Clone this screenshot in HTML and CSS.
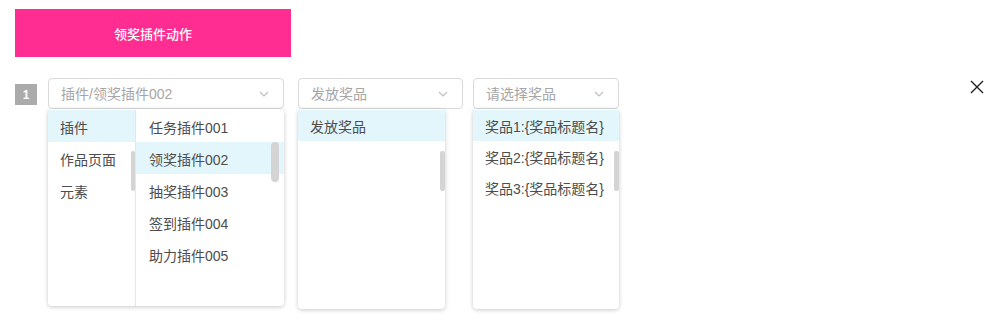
FILE: index.html
```html
<!DOCTYPE html>
<html lang="zh">
<head>
<meta charset="utf-8">
<link rel="stylesheet" href="styles.css">
</head>
<body>
<div class="page">
  <div class="action-btn">领奖插件动作</div>
  <div class="row">
    <div class="badge">1</div>
    <div class="select s1">
      <span class="value">插件/领奖插件002</span>
      <svg class="arrow" width="10" height="6" viewBox="0 0 10 6"><path d="M1 1 L5 5 L9 1" fill="none" stroke="#bfbfbf" stroke-width="1.2"/></svg>
      <div class="menu m1">
        <div class="col left">
          <div class="item active">插件</div>
          <div class="item">作品页面</div>
          <div class="item">元素</div>
          <div class="bar bar-left"></div>
        </div>
        <div class="col right">
          <div class="item">任务插件001</div>
          <div class="item active">领奖插件002</div>
          <div class="item">抽奖插件003</div>
          <div class="item">签到插件004</div>
          <div class="item">助力插件005</div>
          <div class="bar bar-right"></div>
        </div>
      </div>
    </div>
    <div class="select s2">
      <span class="value">发放奖品</span>
      <svg class="arrow" width="10" height="6" viewBox="0 0 10 6"><path d="M1 1 L5 5 L9 1" fill="none" stroke="#bfbfbf" stroke-width="1.2"/></svg>
      <div class="menu m2">
        <div class="item2 active">发放奖品</div>
        <div class="bar bar-thin"></div>
      </div>
    </div>
    <div class="select s3">
      <span class="value">请选择奖品</span>
      <svg class="arrow" width="10" height="6" viewBox="0 0 10 6"><path d="M1 1 L5 5 L9 1" fill="none" stroke="#bfbfbf" stroke-width="1.2"/></svg>
      <div class="menu m3">
        <div class="item2 active">奖品1:{奖品标题名}</div>
        <div class="item2">奖品2:{奖品标题名}</div>
        <div class="item2">奖品3:{奖品标题名}</div>
        <div class="bar bar-thin"></div>
      </div>
    </div>
    <svg class="close" width="14" height="14" viewBox="0 0 14 14"><path d="M1 1 L13 13 M13 1 L1 13" stroke="#1f1f1f" stroke-width="1.4" fill="none"/></svg>
  </div>
</div>
</body>
</html>
```

FILE: styles.css
```css
* { box-sizing: border-box; }
html, body { margin: 0; padding: 0; background: #fff; }
body {
  font-family: "Liberation Sans", "Noto Sans CJK SC", sans-serif;
  width: 1003px;
  height: 321px;
  overflow: hidden;
}
.page {
  padding: 9px 19px 0 15px;
}
.action-btn {
  width: 276px;
  height: 48px;
  background: #ff2c91;
  color: #fff;
  font-size: 13px;
  font-weight: 500;
  display: flex;
  align-items: center;
  justify-content: center;
}
.row {
  display: flex;
  align-items: flex-start;
  margin-top: 21px;
}
.badge {
  width: 22px;
  height: 21px;
  margin-top: 6px;
  background: #ababab;
  color: #fff;
  font-size: 12px;
  font-weight: 700;
  display: flex;
  align-items: center;
  justify-content: center;
}
.select {
  position: relative;
  height: 31px;
  border: 1px solid #d9d9d9;
  border-radius: 4px;
  display: flex;
  align-items: center;
  padding-left: 12px;
  font-size: 14px;
  color: #a6a6a6;
}
.s1 { width: 236px; margin-left: 11px; }
.s2 { width: 165px; margin-left: 14px; }
.s3 { width: 146px; margin-left: 10px; }
.value { line-height: 1; }
.arrow {
  position: absolute;
  right: 14px;
  top: 12px;
}
.close {
  margin-left: auto;
  margin-top: 2px;
}
.menu {
  position: absolute;
  left: -1px;
  top: calc(100% + 1px);
  background: #fff;
  border-radius: 4px;
  box-shadow: 0 1px 4px rgba(0,0,0,0.22);
  padding-top: 1px;
  color: #4d4d4d;
  font-size: 14px;
}
.m1 {
  width: 236px;
  height: 197px;
  display: flex;
}
.m2 { width: 147px; height: 200px; }
.m3 { width: 146px; height: 200px; }
.col { position: relative; height: 100%; }
.col.left {
  width: 88px;
  border-right: 1px solid #e6e6e6;
}
.col.right { flex: 1; }
.item {
  height: 32px;
  display: flex;
  align-items: center;
  padding-left: 12px;
  padding-top: 2px;
  white-space: nowrap;
}
.col.right .item { padding-left: 13px; }
.item2 {
  height: 31px;
  display: flex;
  align-items: center;
  padding-left: 12px;
  white-space: nowrap;
}
.active { background: #e3f6fc; }
.bar {
  position: absolute;
  background: #d4d4d4;
  border-radius: 3px;
}
.bar-left { right: 0; top: 41px; width: 4px; height: 40px; border-radius: 2px; }
.bar-right { right: 5px; top: 32px; width: 8px; height: 40px; border-radius: 4px; }
.bar-thin { right: 0; top: 42px; width: 5px; height: 40px; border-radius: 2px; }
```
